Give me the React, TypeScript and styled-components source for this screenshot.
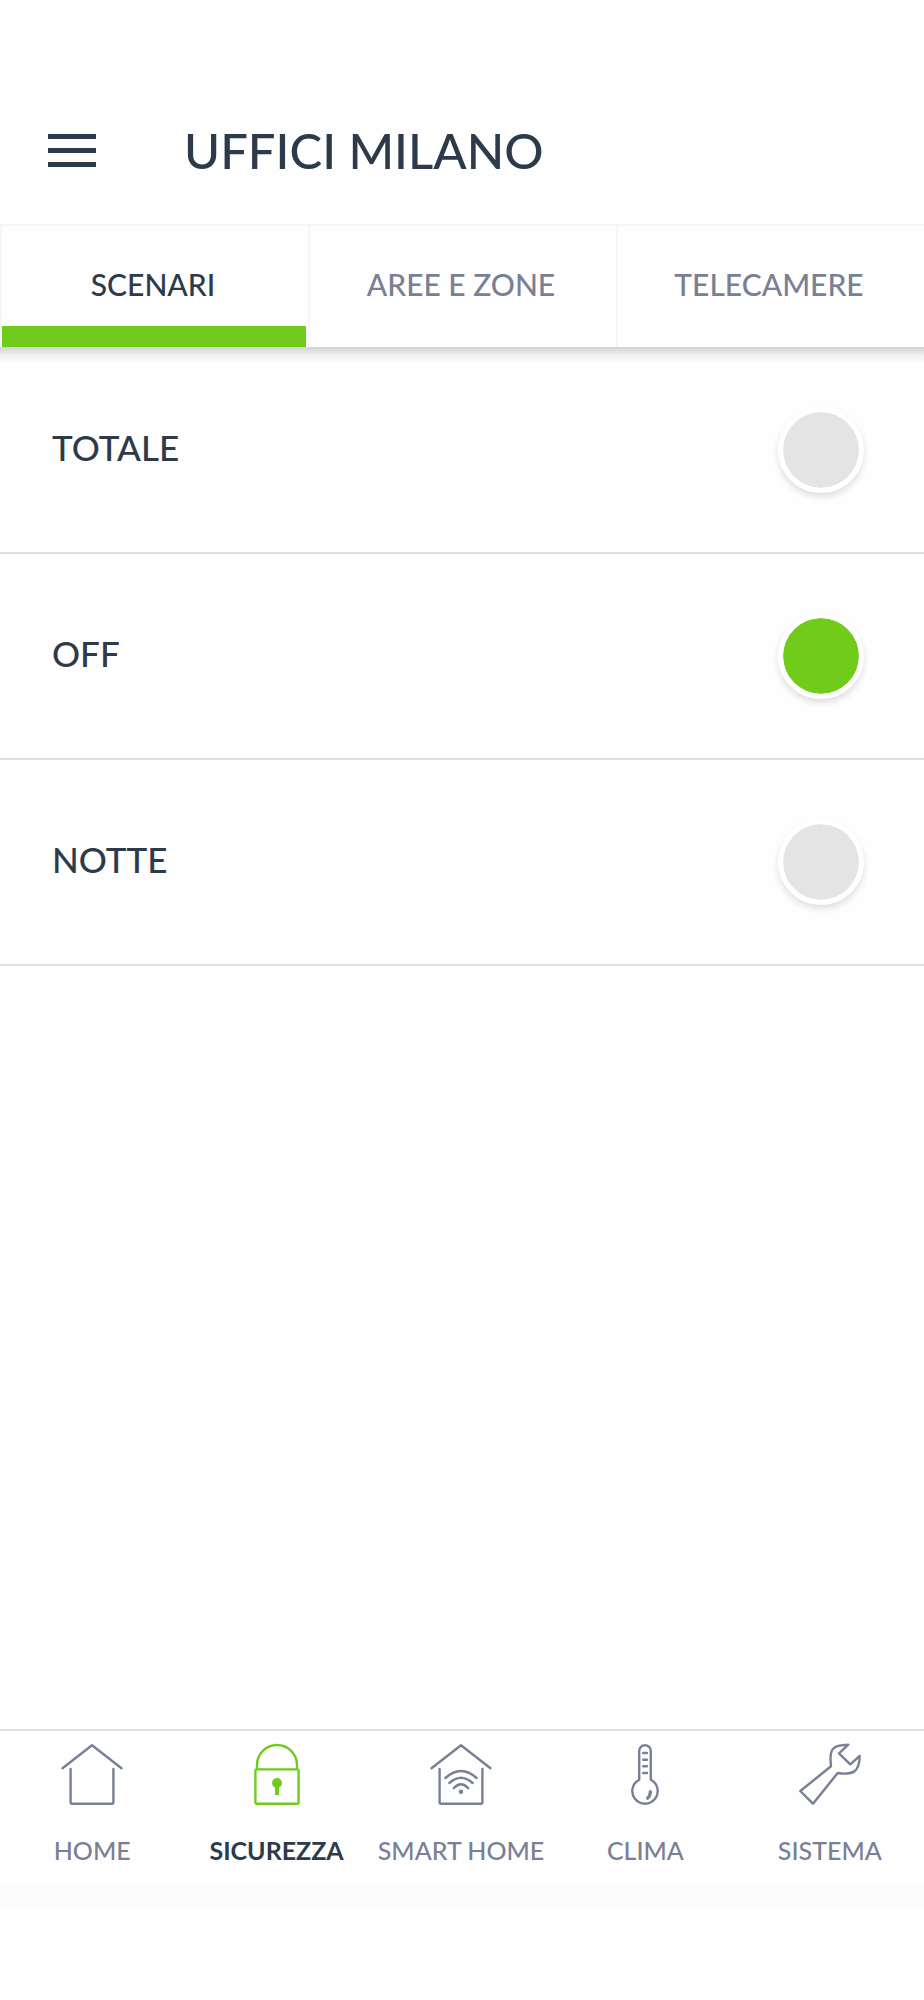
import React, { useState } from 'react';
import styled, { createGlobalStyle } from 'styled-components';

const ink = '#2c3a4a';
const muted = '#797f95';
const green = '#70cb1a';
const line = '#e0e0e0';
const faint = '#f6f6f6';

const GlobalStyle = createGlobalStyle`
  *, *::before, *::after { box-sizing: border-box; }
  body {
    margin: 0;
    background: #fefefe;
    color: ${ink};
    font-family: Lato, "Liberation Sans", sans-serif;
    font-weight: 500;
  }
`;

const Screen = styled.div`
  display: flex;
  flex-direction: column;
  min-height: 100vh;
`;

const Header = styled.header`
  display: flex;
  align-items: center;
  gap: 88px;
  padding: 120px 48px 44px;
`;

const MenuButton = styled.button`
  display: flex;
  flex-direction: column;
  justify-content: space-between;
  width: 48px;
  height: 33px;
  padding: 0;
  border: 0;
  background: none;
  cursor: pointer;
`;

const MenuBar = styled.span`
  height: 5px;
  background: ${ink};
`;

const Title = styled.h1`
  margin: 0;
  font-size: 49px;
  font-weight: 500;
  line-height: 60px;
`;

const Tabs = styled.div`
  position: relative;
  display: grid;
  grid-template-columns: repeat(3, 1fr);
  border-top: 2px solid ${faint};

  &::after {
    content: '';
    position: absolute;
    top: 100%;
    right: 0;
    left: 0;
    height: 16px;
    background: linear-gradient(rgba(0, 0, 0, 0.17), rgba(0, 0, 0, 0.06) 50%, rgba(0, 0, 0, 0));
    pointer-events: none;
  }
`;

const Tab = styled.button<{ $active: boolean }>`
  position: relative;
  height: 121px;
  padding: 0 4px 6px 0;
  border: 0;
  border-left: 2px solid ${faint};
  background: none;
  color: ${(p) => (p.$active ? ink : muted)};
  font: inherit;
  font-size: 30px;
  line-height: 36px;
  cursor: pointer;

  &::after {
    content: '';
    display: ${(p) => (p.$active ? 'block' : 'none')};
    position: absolute;
    right: 2px;
    bottom: 0;
    left: 0;
    height: 21px;
    background: ${green};
  }
`;

const Main = styled.main`
  flex: 1;
  padding-top: 1px;
`;

const Scenario = styled.label`
  display: flex;
  align-items: center;
  justify-content: space-between;
  height: 206px;
  padding: 0 60px 0 52px;
  border-bottom: 2px solid ${line};
  font-size: 35px;
  line-height: 42px;
  cursor: pointer;
`;

const ScenarioName = styled.span`
  padding-bottom: 7px;
`;

const Radio = styled.input`
  appearance: none;
  width: 86px;
  height: 86px;
  margin: 0;
  border: 5px solid #ffffff;
  border-radius: 50%;
  background: #e4e4e4;
  background-clip: padding-box;
  box-shadow: 0 4px 6px rgba(40, 30, 60, 0.14);
  cursor: pointer;

  &:checked {
    background-color: ${green};
  }
`;

const BottomNav = styled.nav`
  display: grid;
  grid-template-columns: repeat(5, 1fr);
  padding: 12px 2px 19px 0;
  border-top: 2px solid ${line};
`;

const NavLink = styled.a<{ $active: boolean }>`
  display: flex;
  flex-direction: column;
  align-items: center;
  gap: 28px;
  color: ${(p) => (p.$active ? ink : muted)};
  font-size: 25px;
  font-weight: ${(p) => (p.$active ? 700 : 500)};
  line-height: 30px;
  text-decoration: none;
  white-space: nowrap;
`;

const Icon = styled.svg<{ $active: boolean }>`
  width: 64px;
  height: 64px;
  fill: none;
  stroke: ${(p) => (p.$active ? green : muted)};
  stroke-width: 2.4;
  stroke-linecap: round;
  stroke-linejoin: round;
`;

const Strip = styled.div`
  height: 23px;
  background: #fbfbfb;
`;

const SafeArea = styled.div`
  height: 93px;
`;

const house = (
  <>
    <path d="M2.5 25.2 32 2.2 61.5 25.2" />
    <path d="M10.6 26v33.2q0 1.5 1.5 1.5h39.8q1.5 0 1.5-1.5V26" />
  </>
);

const icons: Record<string, React.ReactNode> = {
  HOME: house,
  SICUREZZA: (
    <>
      <path d="M12 26v-4a20 20 0 0 1 40 0v4" />
      <rect x="10.4" y="26.4" width="43.2" height="34.4" rx="1.5" />
      <circle cx="32" cy="40" r="5" fill={green} stroke="none" />
      <path d="M30 42h4v10h-4z" fill={green} stroke="none" />
    </>
  ),
  'SMART HOME': (
    <>
      {house}
      <path d="M16.4 35q15.6-14 31.2 0" />
      <path d="M20.4 40q11.6-10.6 23.2 0" />
      <path d="M24.7 45.2q7.3-7.8 14.6 0" />
      <circle cx="32" cy="48.8" r="2.2" fill={muted} stroke="none" />
    </>
  ),
  CLIMA: (
    <>
      <path d="M26.2 36.8V8a5.8 5.8 0 0 1 11.6 0v28.8a12.7 12.7 0 1 1-11.6 0z" />
      <path d="M30.2 10h3.8M30.2 16.7h3.8M30.2 23.3h3.8M30.2 30h3.8" />
      <path d="M37.4 48.6q0 4-2.8 6.6" strokeWidth="3.2" />
    </>
  ),
  SISTEMA: (
    <path d="M2.3 48 15 60.7 39.7 30C54 32 61.5 30 61.7 13L52.3 21.3 41 10.3 50.3 1.7C34 2 31 6 33 23.3z" />
  ),
};

const tabs = ['SCENARI', 'AREE E ZONE', 'TELECAMERE'];
const scenarios = ['TOTALE', 'OFF', 'NOTTE'];
const sections = ['HOME', 'SICUREZZA', 'SMART HOME', 'CLIMA', 'SISTEMA'];

export default function App() {
  const [tab, setTab] = useState('SCENARI');
  const [scenario, setScenario] = useState('OFF');
  const [section, setSection] = useState('SICUREZZA');

  return (
    <Screen>
      <GlobalStyle />
      <Header>
        <MenuButton type="button" aria-label="Menu">
          <MenuBar />
          <MenuBar />
          <MenuBar />
        </MenuButton>
        <Title>UFFICI MILANO</Title>
      </Header>
      <Tabs role="tablist">
        {tabs.map((name) => (
          <Tab
            key={name}
            type="button"
            role="tab"
            aria-selected={tab === name}
            $active={tab === name}
            onClick={() => setTab(name)}
          >
            {name}
          </Tab>
        ))}
      </Tabs>
      <Main>
        {scenarios.map((name) => (
          <Scenario key={name}>
            <ScenarioName>{name}</ScenarioName>
            <Radio
              type="radio"
              name="scenario"
              value={name}
              checked={scenario === name}
              onChange={() => setScenario(name)}
            />
          </Scenario>
        ))}
      </Main>
      <BottomNav>
        {sections.map((name) => (
          <NavLink
            key={name}
            href="#"
            $active={section === name}
            onClick={(event) => {
              event.preventDefault();
              setSection(name);
            }}
          >
            <Icon viewBox="0 0 64 64" aria-hidden="true" $active={section === name}>
              {icons[name]}
            </Icon>
            {name}
          </NavLink>
        ))}
      </BottomNav>
      <Strip />
      <SafeArea />
    </Screen>
  );
}
